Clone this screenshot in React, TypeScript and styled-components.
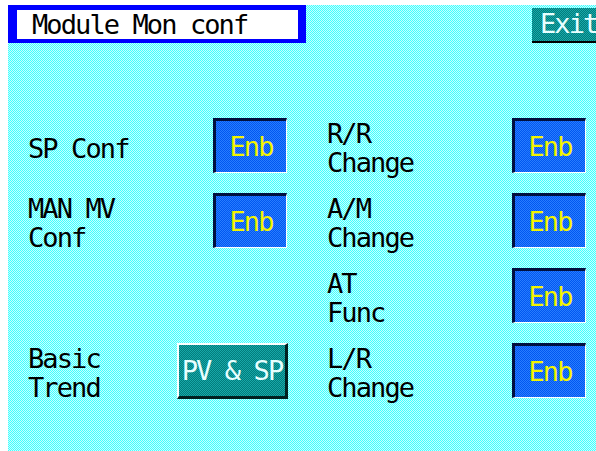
import React from "react";
import styled, { createGlobalStyle } from "styled-components";

const GlobalStyle = createGlobalStyle`
  html {
    overflow: hidden;
    background: #ffffff;
  }
  body {
    margin: 0;
    padding: 5px 0 0 8px;
    width: 588px;
    overflow: hidden;
  }
`;

const FONT = `"DejaVu Sans Mono", "Liberation Mono", monospace`;

// dithered panel colours, like the old HMI screen
const dither = (a: string, b: string) =>
  `repeating-conic-gradient(${a} 0 25%, ${b} 0 50%) 0 0 / 2px 2px`;

type Item = { label: string[]; button?: string; wide?: boolean };

const leftItems: Item[] = [
  { label: ["SP Conf"], button: "Enb" },
  { label: ["MAN MV", "Conf"], button: "Enb" },
  { label: [] },
  { label: ["Basic", "Trend"], button: "PV & SP", wide: true },
];

const rightItems: Item[] = [
  { label: ["R/R", "Change"], button: "Enb" },
  { label: ["A/M", "Change"], button: "Enb" },
  { label: ["AT", "Func"], button: "Enb" },
  { label: ["L/R", "Change"], button: "Enb" },
];

const App: React.FC = () => {
  const renderColumn = (items: Item[]) => (
    <Column>
      {items.map((item, i) => (
        <Row key={i}>
          <Label>
            {item.label.map((line) => (
              <span key={line}>{line}</span>
            ))}
          </Label>
          {item.button &&
            (item.wide ? (
              <TealButton>{item.button}</TealButton>
            ) : (
              <EnbButton>{item.button}</EnbButton>
            ))}
        </Row>
      ))}
    </Column>
  );

  return (
    <>
      <GlobalStyle />
      <Screen>
        <Header>
          <Title>Module Mon conf</Title>
          <ExitButton>Exit</ExitButton>
        </Header>
        <Body>
          {renderColumn(leftItems)}
          {renderColumn(rightItems)}
        </Body>
      </Screen>
    </>
  );
};

const Screen = styled.div`
  width: 600px;
  height: 446px;
  background: ${dither("#40ffff", "#c8ffff")};
  font-family: ${FONT};
  font-size: 27px;
  letter-spacing: -1.9px;
`;

const Header = styled.div`
  display: flex;
  justify-content: space-between;
  align-items: flex-start;
`;

const Title = styled.div`
  box-sizing: border-box;
  width: 298px;
  height: 38px;
  border-style: solid;
  border-color: #0000ff;
  border-width: 5px 8px 4px 9px;
  background: #ffffff;
  color: #000000;
  padding-left: 15px;
  line-height: 30px;
`;

const ExitButton = styled.div`
  box-sizing: border-box;
  margin-top: 3px;
  width: 76px;
  height: 35px;
  background: ${dither("#007c7c", "#1aa8a8")};
  border-bottom: 2px solid #000000;
  color: #e8ffff;
  padding-left: 8px;
  line-height: 32px;
`;

const Body = styled.div`
  display: flex;
  gap: 40px;
  padding: 75px 0 0 20px;
`;

const Column = styled.div`
  width: 259px;
  display: flex;
  flex-direction: column;
  gap: 20px;
`;

const Row = styled.div`
  height: 55px;
  display: flex;
  align-items: center;
  justify-content: space-between;
`;

const Label = styled.div`
  display: flex;
  flex-direction: column;
  color: #000000;
  line-height: 29px;
  padding-top: 5px;
`;

const EnbButton = styled.div`
  box-sizing: border-box;
  width: 74px;
  height: 55px;
  display: flex;
  align-items: center;
  justify-content: center;
  background: ${dither("#0058f0", "#2a7cff")};
  border-style: solid;
  border-width: 3px 1px 1px 3px;
  border-color: #001040 #ffffff #ffffff #001040;
  color: #f4f400;
`;

const TealButton = styled.div`
  box-sizing: border-box;
  width: 111px;
  height: 56px;
  margin-right: -1px;
  display: flex;
  align-items: center;
  justify-content: center;
  background: ${dither("#007c7c", "#1aa8a8")};
  border-style: solid;
  border-width: 2px 3px 3px 2px;
  border-color: #ffffff #002020 #002020 #ffffff;
  color: #e8ffff;
`;

export default App;
